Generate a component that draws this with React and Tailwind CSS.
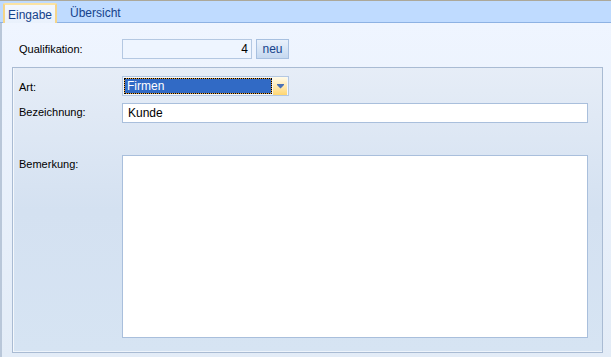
export default function App() {
  return (
    <div className="w-[611px] h-[357px] overflow-hidden flex flex-col bg-[#e3ecf7] text-[11px] text-black font-['Liberation_Sans',_Arial,_sans-serif]">
      <div className="h-px bg-[#aca899]" />
      {/* tab strip */}
      <div className="h-[22px] bg-[#bfdbff] border-b border-[#8db2e3] flex items-end pl-[3px] relative">
        <div className="h-[20px] w-[54px] -mb-px bg-gradient-to-b from-[#f3f7fd] to-[#e9f1fc] border-t-2 border-x-2 border-[#f5d589] border-t-[#fbe3a3] rounded-t-[2px] flex items-center justify-center text-[#15428b] text-[12px] pt-[1px]">
          Eingabe
        </div>
        <div className="h-[20px] flex items-center pl-[13px] text-[#15428b] text-[12px] pt-[1px]">
          Übersicht
        </div>
      </div>
      {/* content */}
      <div className="flex-1 flex flex-col border-l-2 border-[#b9c7d9] bg-gradient-to-b from-[#eff5ff] to-[#e3ecf7] pl-[10px] pr-[8px]">
        <div className="flex items-center h-[20px] mt-[16px]">
          <div className="w-[110px] pl-[7px]">Qualifikation:</div>
          <div className="w-[130px] h-[20px] border border-[#b4c8e2] bg-[#eef5ff] flex items-center justify-end pr-[3px] text-[12px]">4</div>
          <div className="ml-[4px] w-[33px] h-[20px] border border-[#a7c0e0] bg-gradient-to-b from-[#e9f1fb] to-[#c6d9f0] flex items-center justify-center text-[#15428b] text-[12px] pb-[1px]">neu</div>
        </div>
        <div className="mt-[8px] w-[591px] h-[286px] border border-[#a9bbd3] bg-gradient-to-b from-[#e6edf7] via-[#d4e1f1] to-[#d6e4f3] flex flex-col pl-[6px] pr-[14px] pt-[8px] shadow-[inset_1px_0_0_#f4f8fc,inset_0_-1px_0_#eef4fb]">
          <div className="flex items-start h-[20px]">
            <div className="w-[103px] pt-[3px]">Art:</div>
            <div className="w-[167px] h-[20px] border border-[#b4c8e2] bg-[#f1f6fd] flex items-center p-px">
              <div className="flex-1 h-[16px] bg-[#e9a23b] border border-dotted border-black shadow-[inset_0_0_0_200px_#316ac5] text-white text-[12px] flex items-center pl-[2px]">Firmen</div>
              <div className="w-[14px] h-[18px] ml-px bg-gradient-to-b from-[#fffbea] to-[#ffd670] flex items-center justify-center">
                <svg width="7" height="5" viewBox="0 0 7 5">
                  <path d="M0 0h7v1H0z M0 1h7L3.5 4.5z" fill="#4b71b5" />
                </svg>
              </div>
            </div>
          </div>
          <div className="flex items-start h-[20px] mt-[7px]">
            <div className="w-[103px] pt-[1px]">Bezeichnung:</div>
            <div className="flex-1 h-[20px] border border-[#a9bfdc] bg-white flex items-center pl-[5px] text-[12px]">Kunde</div>
          </div>
          <div className="flex items-start mt-[32px]">
            <div className="w-[103px] pt-[1px]">Bemerkung:</div>
            <div className="flex-1 h-[183px] border border-[#a9bfdc] bg-white" />
          </div>
        </div>
      </div>
    </div>
  );
}
